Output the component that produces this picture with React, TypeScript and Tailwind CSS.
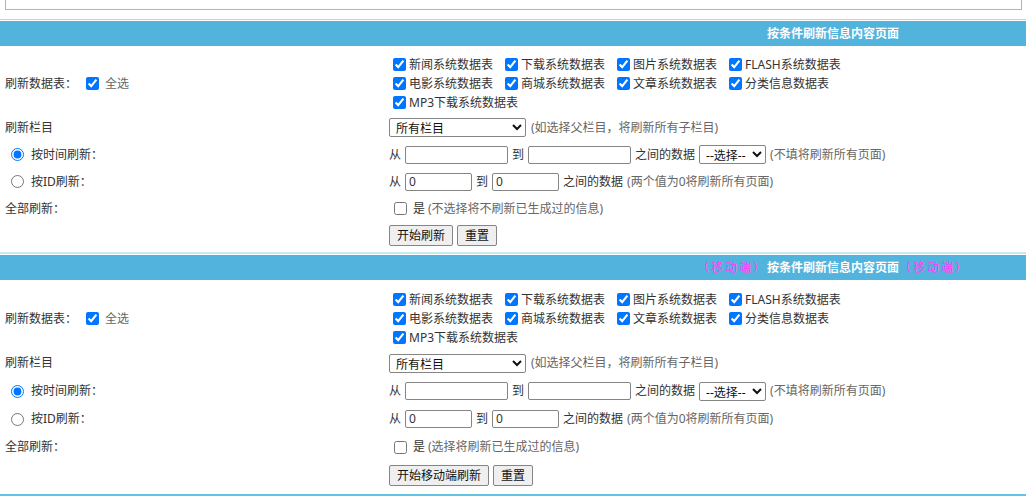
import { useState } from 'react'

const tables = [
  ['新闻系统数据表', '下载系统数据表', '图片系统数据表', 'FLASH系统数据表'],
  ['电影系统数据表', '商城系统数据表', '文章系统数据表', '分类信息数据表'],
  ['MP3下载系统数据表'],
]

interface SectionProps {
  mobile?: boolean
}

function Header({ mobile }: SectionProps) {
  return (
    <div className="h-[25px] bg-[#52b4dd] overflow-hidden">
      <div className="w-[1666px] h-[25px] flex items-center justify-center text-[12px] leading-[25px]">
        {mobile && <span className="text-[#ff40ff] tracking-[2px]">（移动端）</span>}
        <span className="text-white font-bold">按条件刷新信息内容页面</span>
        {mobile && <span className="text-[#ff40ff] tracking-[2px]">（移动端）</span>}
      </div>
    </div>
  )
}

function Row({ label, rowH, children }: { label: React.ReactNode; rowH: string; children: React.ReactNode }) {
  return (
    <div className={`flex items-center ${rowH}`}>
      <div className="w-[389px] shrink-0 pl-[5px] flex items-center">{label}</div>
      <div className="flex items-center gap-[4px] whitespace-nowrap">{children}</div>
    </div>
  )
}

const inputCls = 'h-[18px] border border-[#858585] rounded-[2px] px-[3px] text-[12px] bg-white outline-none'
const selectCls = 'h-[19px] border border-[#858585] rounded-[2px] pl-[2px] text-[12px] bg-white text-[#111]'
const btnCls = 'h-[21px] px-[7px] border border-[#858585] rounded-[2px] bg-[#efefef] text-[12px] leading-[19px] text-[#111]'

function Section({ mobile }: SectionProps) {
  const [byTime, setByTime] = useState(true)
  const rowH = mobile ? 'h-[28px]' : 'h-[27px]'

  return (
    <div>
      <Header mobile={mobile} />
      <div className={`flex items-center ${mobile ? 'pt-[10px]' : 'pt-[9px]'} pb-[2px]`}>
        <div className="w-[389px] shrink-0 pl-[5px] flex items-center">
          <span>刷新数据表：</span>
          <input type="checkbox" defaultChecked className="ml-[9px] mr-[6px] w-[13px] h-[13px]" />
          <span className="text-[#666]">全选</span>
        </div>
        <div className="grid grid-cols-[112px_112px_112px_auto]">
          {tables.flat().map((t) => (
            <label key={t} className="flex items-center h-[19px] leading-[19px] whitespace-nowrap">
              <input type="checkbox" defaultChecked className="ml-[4px] mr-[3px] w-[13px] h-[13px] shrink-0" />
              <span>{t}</span>
            </label>
          ))}
        </div>
      </div>

      <Row label="刷新栏目" rowH={rowH}>
        <select className={`${selectCls} w-[137px]`}>
          <option>所有栏目</option>
        </select>
        <span className="text-[#666] ml-[1px]">(如选择父栏目，将刷新所有子栏目)</span>
      </Row>

      <Row
        rowH={rowH}
        label={
          <>
            <input type="radio" name={mobile ? 'm' : 'p'} checked={byTime} onChange={() => setByTime(true)} className="ml-[6px] mr-[7px] w-[13px] h-[13px]" />
            <span>按时间刷新：</span>
          </>
        }
      >
        <span>从</span>
        <input className={`${inputCls} w-[103px]`} />
        <span>到</span>
        <input className={`${inputCls} w-[103px]`} />
        <span>之间的数据</span>
        <select className={`${selectCls} w-[67px]`}>
          <option>--选择--</option>
        </select>
        <span className="text-[#666]">(不填将刷新所有页面)</span>
      </Row>

      <Row
        rowH={rowH}
        label={
          <>
            <input type="radio" name={mobile ? 'm' : 'p'} checked={!byTime} onChange={() => setByTime(false)} className="ml-[6px] mr-[7px] w-[13px] h-[13px]" />
            <span>按ID刷新：</span>
          </>
        }
      >
        <span>从</span>
        <input className={`${inputCls} w-[67px]`} defaultValue="0" />
        <span>到</span>
        <input className={`${inputCls} w-[67px]`} defaultValue="0" />
        <span>之间的数据</span>
        <span className="text-[#666]">(两个值为0将刷新所有页面)</span>
      </Row>

      <Row label="全部刷新：" rowH={rowH}>
        <input type="checkbox" className="ml-[5px] mr-[3px] w-[13px] h-[13px]" />
        <span className="-ml-[1px]">是</span>
        <span className="text-[#666] -ml-[1px]">
          {mobile ? '(选择将刷新已生成过的信息)' : '(不选择将不刷新已生成过的信息)'}
        </span>
      </Row>

      <Row label="" rowH={rowH}>
        <button className={btnCls}>{mobile ? '开始移动端刷新' : '开始刷新'}</button>
        <button className={btnCls}>重置</button>
      </Row>
    </div>
  )
}

export default function App() {
  return (
    <div className="w-[1026px] h-[499px] overflow-hidden bg-white text-[12px] text-[#333] font-['Noto_Sans','Noto_Sans_CJK_SC',sans-serif]">
      <div className="h-[10px] ml-[5px] mr-[4px] border-x border-b border-[#7dc6e4]" />
      <div className="h-px mt-[9px] bg-[#a6daef]" />
      <div className="mt-[1px]">
        <Section />
      </div>
      <div className="h-[2px] mt-[3px] bg-[#c4e8f6]" />
      <div className="mt-[1px]">
        <Section mobile />
      </div>
      <div className="h-[2px] mt-[5px] bg-[#62c3e3]" />
    </div>
  )
}
